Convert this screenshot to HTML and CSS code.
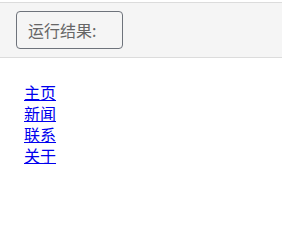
FILE: index.html
```html
<!DOCTYPE html>
<html lang="zh">
<head>
<meta charset="utf-8">
<link rel="stylesheet" href="styles.css">
</head>
<body>
<div class="bar">
  <button class="run">运行结果:</button>
</div>
<nav class="links">
  <a href="#">主页</a>
  <a href="#">新闻</a>
  <a href="#">联系</a>
  <a href="#">关于</a>
</nav>
</body>
</html>
```
FILE: styles.css
```css
html, body {
  margin: 0;
  padding: 0;
  background: #fff;
}
body {
  padding-top: 2px;
  font-family: "Noto Sans CJK SC", "Noto Sans", sans-serif;
}
.bar {
  box-sizing: border-box;
  height: 56px;
  background: #f5f5f5;
  border-top: 1px solid #dcdcdc;
  border-bottom: 1px solid #dcdcdc;
  padding: 8px 0 0 16px;
}
.run {
  box-sizing: border-box;
  width: 107px;
  height: 38px;
  padding: 0 0 0 11px;
  text-align: left;
  background: #f5f5f5;
  border: 1px solid #6e737b;
  border-radius: 4px;
  color: #666;
  font-family: "Noto Sans CJK SC", "Noto Sans", sans-serif;
  font-size: 16px;
}
.links {
  display: flex;
  flex-direction: column;
  align-items: flex-start;
  padding: 24px 0 0 24px;
}
.links a {
  color: #0000ee;
  font-size: 16px;
  line-height: 21px;
}
```
